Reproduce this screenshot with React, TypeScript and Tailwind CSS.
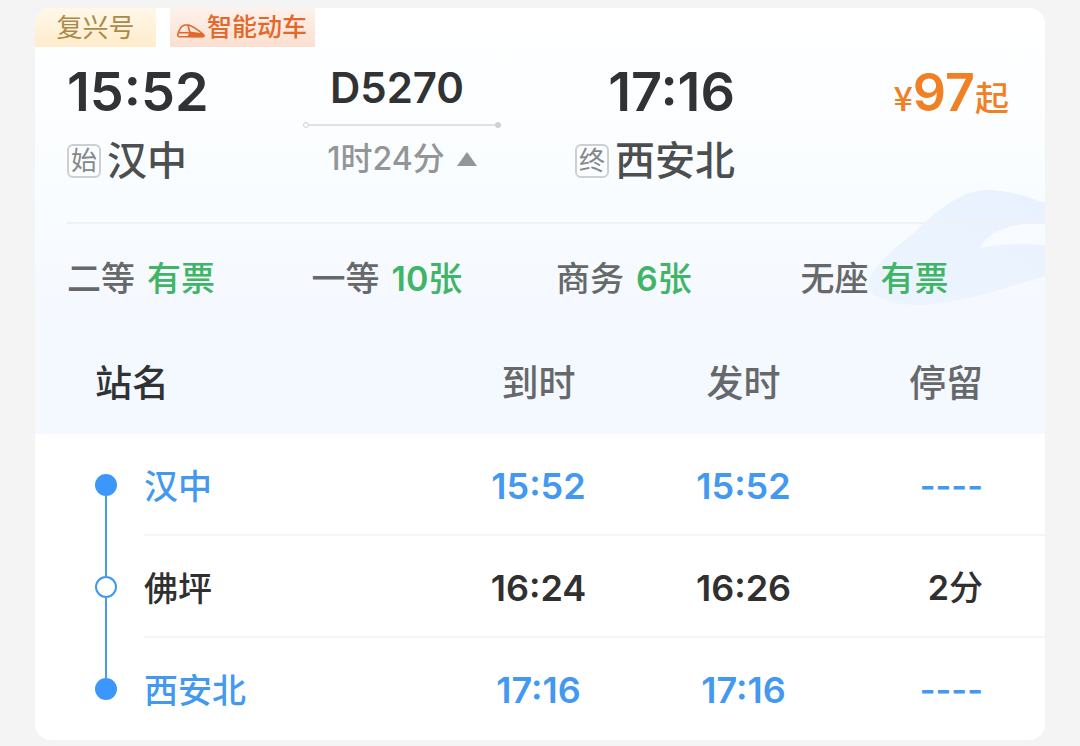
type Seat = {
    name: string;
    left: string;
};

type Stop = {
    station: string;
    arrive: string;
    depart: string;
    stay: string;
    terminal: boolean; // first or last stop of the trip
};

const seats: Seat[] = [
    { name: '二等', left: '有票' },
    { name: '一等', left: '10张' },
    { name: '商务', left: '6张' },
    { name: '无座', left: '有票' },
];

const stops: Stop[] = [
    { station: '汉中', arrive: '15:52', depart: '15:52', stay: '----', terminal: true },
    { station: '佛坪', arrive: '16:24', depart: '16:26', stay: '2分', terminal: false },
    { station: '西安北', arrive: '17:16', depart: '17:16', stay: '----', terminal: true },
];

// Digits and dashes are set heavier than the unit that follows them
function Amount({ value }: { value: string }) {
    const digits = value.match(/^[\d-]+/)?.[0] ?? '';
    return (
        <>
            {digits && <span className="font-semibold">{digits}</span>}
            {value.slice(digits.length)}
        </>
    );
}

function TrainIcon() {
    return (
        <svg viewBox="0 0 28 14" className="w-7 h-3.5 mt-1.5" fill="none" stroke="#e2692a" strokeWidth="1.6" strokeLinejoin="round" aria-hidden="true">
            <path d="M3 12.800C.5 12.800.4 11 1.200 9 2.500 5 5 1.500 8 1h3.500C16 2 21 6 26 10c1.800 1.600 1.200 2.800-.5 2.800Z" />
            <path d="M1.500 8.800H14" />
            <path d="M13 7.500 25 9.200c2.800 2 2 4-.5 4H12c-1.800 0-1.500-1.800-.5-2.600Z" fill="#e2692a" stroke="none" />
            <path d="M11 1.200l1.800 7.200" />
        </svg>
    );
}

// Faint bullet-train nose behind the fare area
function TrainBackdrop() {
    return (
        <svg viewBox="0 0 180 116" className="absolute right-0 bottom-7 w-[180px] h-[116px]" aria-hidden="true">
            <defs>
                <linearGradient id="nose" x1="0" y1="1" x2="1" y2="0">
                    <stop offset="0" stopColor="#ecf5ff" />
                    <stop offset="1" stopColor="#e8f1fd" />
                </linearGradient>
            </defs>
            <path
                d="M180 13C158 5 140 0 122 0 96 0 70 22 50 42 30 58 8 74 4 92c-4 16 26 24 56 23 40-3 80-17 120-29V55c-25-2-50 0-65 3 7-16 30-25 65-26Z"
                fill="url(#nose)"
            />
        </svg>
    );
}

function StationBadge({ children }: { children: string }) {
    return (
        <span className="flex items-center justify-center size-[34px] rounded-md border-2 border-[#cdcfd0] text-[26px] leading-none text-[#858788]">
            {children}
        </span>
    );
}

function TripSummary() {
    return (
        <div className="grid grid-cols-[236fr_198fr_234fr_274fr] pl-8 pr-9 pt-[15px]">
            <div>
                <time className="block text-[54px] leading-[60px] font-semibold text-[#303233]">15:52</time>
                <div className="flex items-center gap-1.5 mt-[11px]">
                    <StationBadge>始</StationBadge>
                    <span className="text-[40px] leading-[56px] font-medium text-[#4c4e4f]">汉中</span>
                </div>
            </div>

            <div className="flex flex-col items-center">
                <h1 className="pr-2.5 text-[42px] leading-[52px] font-semibold text-[#303233]">D5270</h1>
                <div className="flex items-center w-full mt-2">
                    <span className="size-1.5 rounded-full border border-[#cfd1d2]" />
                    <span className="h-0.5 flex-1 bg-[#dfe1e2]" />
                    <span className="size-1.5 rounded-full bg-[#cfd1d2]" />
                </div>
                <button type="button" className="flex items-center gap-3 mt-2 text-[32px] leading-[46px] font-medium text-[#939596]">
                    1时24分
                    <svg viewBox="0 0 20 14" className="w-5 h-3.5" fill="currentColor" aria-hidden="true">
                        <path d="M10 0 20 14H0Z" />
                    </svg>
                </button>
            </div>

            <div className="flex flex-col items-end">
                <time className="block text-[54px] leading-[60px] font-semibold text-[#303233]">17:16</time>
                <div className="flex items-center gap-1.5 mt-[11px]">
                    <StationBadge>终</StationBadge>
                    <span className="text-[40px] leading-[56px] font-medium text-[#4c4e4f]">西安北</span>
                </div>
            </div>

            <p className="flex items-baseline justify-end pt-px font-semibold text-[#f08023]">
                <span className="font-['Noto_Sans_CJK_SC',sans-serif] text-[34px] leading-none font-medium">¥</span>
                <span className="text-[52px] leading-[60px]">97</span>
                <span className="text-[34px] leading-none font-medium">起</span>
            </p>
        </div>
    );
}

function StopRow({ stop, first, last }: { stop: Stop; first: boolean; last: boolean }) {
    const border = last ? 'border-b-2 border-transparent' : 'border-b-2 border-[#f5f5f5]';
    return (
        <tr className={stop.terminal ? 'text-[#4399f0]' : 'text-[#303030]'}>
            <td className="pl-[59px]">
                <div className="flex flex-col items-center w-6 h-[102px]">
                    <span className={first ? 'flex-1' : 'flex-1 w-0.5 bg-[#4a9be8]'} />
                    <span
                        className={
                            stop.terminal
                                ? 'size-[22px] rounded-full bg-[#3b97fb]'
                                : 'size-[22px] rounded-full border-2 border-[#3f97ee]'
                        }
                    />
                    <span className={last ? 'flex-1' : 'flex-1 w-0.5 bg-[#4a9be8]'} />
                </div>
            </td>
            <th scope="row" className={`pt-1.5 text-left text-[34px] font-medium ${border}`}>{stop.station}</th>
            <td className={`pt-1 text-center ${border}`}>{stop.arrive}</td>
            <td className={`pt-1 text-center ${border}`}>{stop.depart}</td>
            <td className={`pt-1 pr-[62px] text-right text-[34px] font-medium ${border}`}>
                <Amount value={stop.stay} />
            </td>
        </tr>
    );
}

export default function App() {
    return (
        <main className="bg-[#f4f4f4] px-[35px] pt-2 pb-1.5 font-['Inter','Noto_Sans_CJK_SC',sans-serif]">
            <article className="rounded-2xl overflow-hidden bg-white">
                <section className="bg-linear-to-b from-white via-[#fafdff] to-[#f4f8ff]">
                    <div className="flex gap-3.5 text-[26px] leading-[39px]">
                        <span className="w-[121px] text-center bg-linear-to-b from-[#fff8e9] to-[#feeccb] text-[#aa8a4a]">复兴号</span>
                        <span className="flex items-center pl-[7px] pr-2 gap-0.5 bg-linear-to-b from-[#fdf2ec] to-[#fbdfd1] text-[25px] text-[#e2692a] font-medium">
                            <TrainIcon />
                            智能动车
                        </span>
                    </div>
                    <TripSummary />
                    <div className="relative mt-[33px]">
                        <TrainBackdrop />
                        <div className="relative ml-8 border-t-2 border-[#eff1f2]">
                            <ul className="grid grid-cols-4 py-7 text-[34px] leading-[54px] font-medium">
                                {seats.map((seat) => (
                                    <li key={seat.name} className="flex gap-3 text-[#666869]">
                                        {seat.name}
                                        <span className="text-[#41b566]">
                                            <Amount value={seat.left} />
                                        </span>
                                    </li>
                                ))}
                            </ul>
                        </div>
                    </div>
                </section>

                <table className="w-full table-fixed border-separate border-spacing-0 text-4xl font-semibold">
                    <colgroup>
                        <col className="w-[109px]" />
                        <col />
                        <col className="w-[205px]" />
                        <col className="w-[205px]" />
                        <col className="w-[199px]" />
                    </colgroup>
                    <thead className="bg-[#f4f8ff] text-[37px] text-[#666869]">
                        <tr className="h-[100px]">
                            <th scope="col" colSpan={2} className="pl-[60px] text-left font-medium text-[#303233]">站名</th>
                            <th scope="col" className="font-medium">到时</th>
                            <th scope="col" className="font-medium">发时</th>
                            <th scope="col" className="pr-[62px] text-right font-medium">停留</th>
                        </tr>
                    </thead>
                    <tbody>
                        {stops.map((stop, i) => (
                            <StopRow key={stop.station} stop={stop} first={i === 0} last={i === stops.length - 1} />
                        ))}
                    </tbody>
                </table>
            </article>
        </main>
    );
}
